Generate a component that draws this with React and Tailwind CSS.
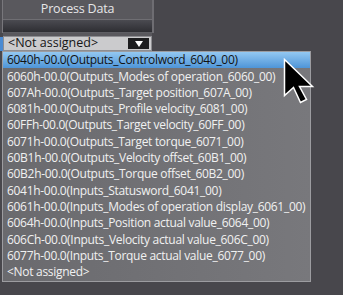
import React from "react";

const items = [
  "6040h-00.0(Outputs_Controlword_6040_00)",
  "6060h-00.0(Outputs_Modes of operation_6060_00)",
  "607Ah-00.0(Outputs_Target position_607A_00)",
  "6081h-00.0(Outputs_Profile velocity_6081_00)",
  "60FFh-00.0(Outputs_Target velocity_60FF_00)",
  "6071h-00.0(Outputs_Target torque_6071_00)",
  "60B1h-00.0(Outputs_Velocity offset_60B1_00)",
  "60B2h-00.0(Outputs_Torque offset_60B2_00)",
  "6041h-00.0(Inputs_Statusword_6041_00)",
  "6061h-00.0(Inputs_Modes of operation display_6061_00)",
  "6064h-00.0(Inputs_Position actual value_6064_00)",
  "606Ch-00.0(Inputs_Velocity actual value_606C_00)",
  "6077h-00.0(Inputs_Torque actual value_6077_00)",
  "<Not assigned>",
];

export default function App() {
  return (
    <div className="relative w-[343px] h-[295px] overflow-hidden bg-[#48474c] font-['Open_Sans','Noto_Sans',sans-serif] text-[12px] tracking-[-0.3px]">
      <div className="grid grid-cols-[3px_149px_2px] grid-rows-[20px_13px_18px] w-[154px]">
        {/* header row */}
        <div className="bg-[#4f4e53] border-r border-[#78777c]" />
        <div className="bg-[#59585d] border-b border-[#6f6e73] flex items-center justify-center text-[#e6e6e8] leading-none pb-[1px] text-[12.5px] tracking-[-0.2px]">
          Process Data
        </div>
        <div className="bg-[#6e6d72]" />
        {/* row 2 */}
        <div className="bg-[#4f4e53] border-r border-[#78777c]" />
        <div className="bg-gradient-to-b from-[#4b4b51] to-[#2e2e33] border-b border-[#5e5e63]" />
        <div className="bg-[#6e6d72]" />
        {/* row 3 */}
        <div className="bg-[#4a8ad2] mt-[4px]" />
        <div className="pt-[3px] bg-[#59585d]">
          <div className="h-[15px] bg-[#cbcbcd] border border-[#8d8d91] flex items-center justify-between pl-[4px] pr-[2px]">
            <span className="text-[#151515] leading-none text-[12.5px] tracking-normal">&lt;Not assigned&gt;</span>
            <span className="w-[21px] h-[11px] bg-[#1d1d1f] flex items-center justify-center">
              <svg width="8" height="6" viewBox="0 0 8 6">
                <polygon points="0,0 8,0 4,6" fill="#ffffff" />
              </svg>
            </span>
          </div>
        </div>
        <div className="bg-[#48474c]" />
      </div>

      {/* dropdown list */}
      <div className="absolute left-[2px] top-[51px] w-[309px] border border-[#9c9ca0] bg-gradient-to-r from-[#6a6a6e] to-[#78787c] flex flex-col">
        {items.map((t, i) => (
          <div
            key={i}
            className={
              i === 0
                ? "h-[16.33px] flex items-center pl-[4px] whitespace-nowrap bg-gradient-to-b from-[#93c8f1] to-[#4e95d8] text-[#121212]"
                : "h-[16.33px] flex items-center pl-[4px] whitespace-nowrap text-[#f1f1f1]"
            }
          >
            {t}
          </div>
        ))}
      </div>

      {/* cursor */}
      <svg
        className="absolute left-[283px] top-[58px]"
        width="32"
        height="48"
        viewBox="-1.5 -1.5 32 48"
      >
        <polygon
          points="0,0 0,36 9,28 16,43 22,40 15,27 28,27"
          fill="#000000"
          stroke="#ffffff"
          strokeWidth="1.5"
          strokeLinejoin="miter"
        />
      </svg>
    </div>
  );
}
